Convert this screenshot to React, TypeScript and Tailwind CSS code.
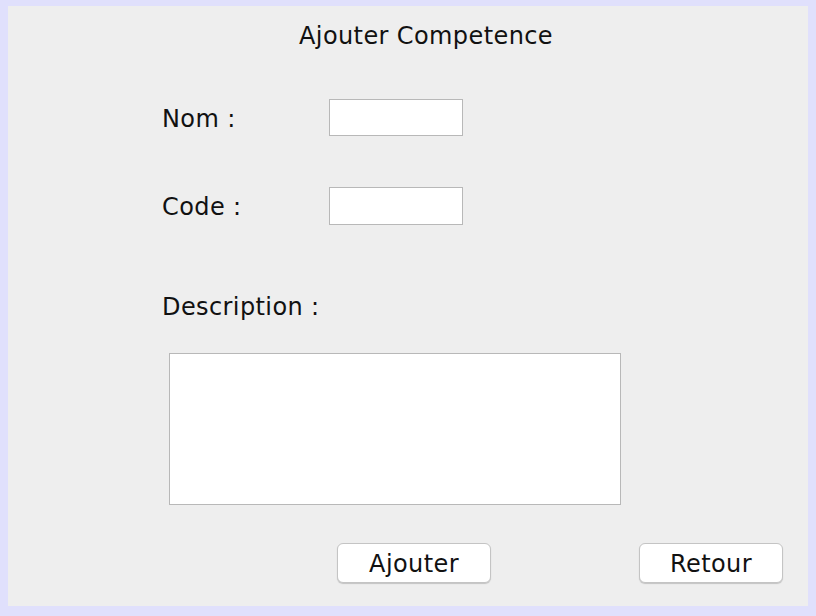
export default function App() {
  const font = { fontFamily: '"DejaVu Sans", "Liberation Sans", sans-serif' };

  return (
    <div className="w-[816px] h-[616px] bg-[#e0e0fc] pt-[6px] pl-[8px]">
      <div
        className="w-[800px] h-[600px] bg-[#eeeeee] text-[#111111] flex flex-col text-[24px] leading-[28px] tracking-[0.4px]"
        style={font}
      >
        {/* titre */}
        <div className="pt-[16px] pl-[291px]">Ajouter Competence</div>

        {/* Nom */}
        <div className="flex items-center mt-[49px] pl-[154px]">
          <span className="w-[167px] pt-[2px]">Nom :</span>
          <input className="w-[134px] h-[37px] bg-white border border-[#b8b8b8] outline-none" />
        </div>

        {/* Code */}
        <div className="flex items-center mt-[51px] pl-[154px]">
          <span className="w-[167px] pt-[2px]">Code :</span>
          <input className="w-[134px] h-[38px] bg-white border border-[#b8b8b8] outline-none" />
        </div>

        {/* Description */}
        <div className="mt-[68px] pl-[154px]">Description :</div>
        <div className="mt-[32px] pl-[161px]">
          <textarea className="block w-[452px] h-[152px] bg-white border border-[#b8b8b8] outline-none resize-none" />
        </div>

        {/* boutons */}
        <div className="flex mt-[38px] pl-[329px]">
          <button className="w-[154px] h-[40px] pt-[2px] bg-white border border-[#c4c4c4] rounded-[6px] shadow-[0_1px_1px_rgba(0,0,0,0.18)]">
            Ajouter
          </button>
          <button className="ml-[148px] w-[144px] h-[40px] pt-[2px] bg-white border border-[#c4c4c4] rounded-[6px] shadow-[0_1px_1px_rgba(0,0,0,0.18)]">
            Retour
          </button>
        </div>
      </div>
    </div>
  );
}
